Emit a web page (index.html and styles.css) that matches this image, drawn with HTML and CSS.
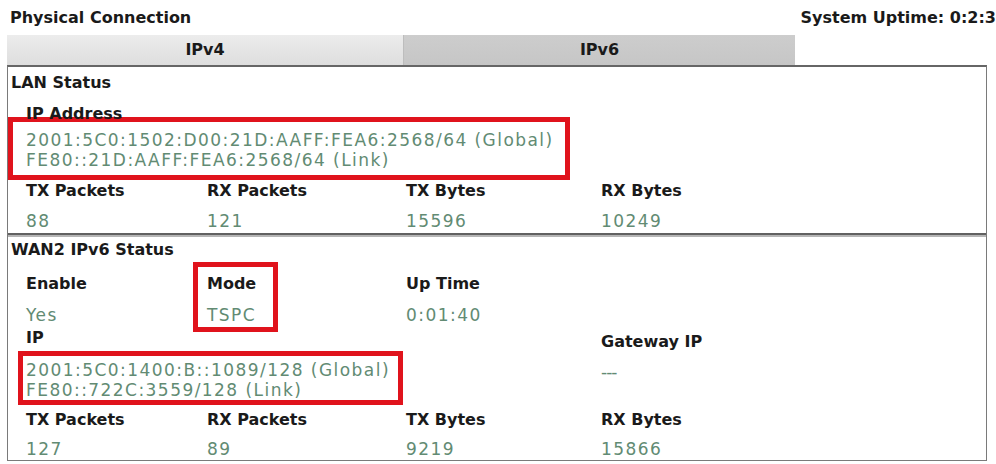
FILE: index.html
```html
<!DOCTYPE html>
<html lang="en">
<head>
    <meta charset="UTF-8">
    <meta name="viewport" content="width=device-width, initial-scale=1.0">
    <title>Physical Connection</title>
    <link rel="stylesheet" href="styles.css">
</head>
<body>
    <div class="top">
        <h1>Physical Connection</h1>
        <span class="uptime">System Uptime: 0:2:3</span>
    </div>

    <div class="tabs">
        <div class="tab">IPv4</div>
        <div class="tab active">IPv6</div>
    </div>

    <div class="panel">
        <!-- LAN -->
        <div class="section">
            <h2>LAN Status</h2>
            <div class="label ip-label">IP Address</div>
            <div class="mark mark-lan">
                <div class="value">2001:5C0:1502:D00:21D:AAFF:FEA6:2568/64 (Global)</div>
                <div class="value">FE80::21D:AAFF:FEA6:2568/64 (Link)</div>
            </div>
            <div class="grid stats">
                <div class="label">TX Packets</div>
                <div class="label">RX Packets</div>
                <div class="label">TX Bytes</div>
                <div class="label">RX Bytes</div>
                <div class="value">88</div>
                <div class="value">121</div>
                <div class="value">15596</div>
                <div class="value">10249</div>
            </div>
        </div>

        <!-- WAN2 -->
        <div class="section wan">
            <h2>WAN2 IPv6 Status</h2>
            <div class="grid info">
                <div class="cell">
                    <div class="label">Enable</div>
                    <div class="value">Yes</div>
                </div>
                <div class="cell mark mark-mode">
                    <div class="label">Mode</div>
                    <div class="value">TSPC</div>
                </div>
                <div class="cell">
                    <div class="label">Up Time</div>
                    <div class="value">0:01:40</div>
                </div>
            </div>
            <div class="grid ip">
                <div class="label">IP</div>
                <div class="label gw">Gateway IP</div>
                <div class="mark mark-wan">
                    <div class="value">2001:5C0:1400:B::1089/128 (Global)</div>
                    <div class="value">FE80::722C:3559/128 (Link)</div>
                </div>
                <div class="value gw-value">---</div>
            </div>
            <div class="grid stats stats-wan">
                <div class="label">TX Packets</div>
                <div class="label">RX Packets</div>
                <div class="label">TX Bytes</div>
                <div class="label">RX Bytes</div>
                <div class="value">127</div>
                <div class="value">89</div>
                <div class="value">9219</div>
                <div class="value">15866</div>
            </div>
        </div>
    </div>
</body>
</html>
```

FILE: styles.css
```css
/* Page */
body {
    margin: 0;
    background-color: #ffffff;
    color: #1a1a1a;
    font-family: "DejaVu Sans", "Liberation Sans", sans-serif;
}

h1, h2 {
    margin: 0;
    font-size: 16px;
    line-height: 20px;
    font-weight: bold;
}

/* Title row */
.top {
    display: flex;
    justify-content: space-between;
    height: 35px;
    box-sizing: border-box;
    padding: 8px 0 7px 10px;
}

.uptime {
    font-size: 16px;
    line-height: 20px;
    font-weight: bold;
    white-space: nowrap;
}

/* Tabs */
.tabs {
    display: flex;
    margin-left: 7px;
}

.tab {
    width: 396px;
    height: 30px;
    line-height: 30px;
    text-align: center;
    font-size: 16px;
    font-weight: bold;
    background: linear-gradient(#ececec, #dedede);
}

.tab.active {
    width: 391px;
    background: linear-gradient(#cdcdcd, #c6c6c6);
    border-left: 1px solid #bdbdbd;
}

/* Box */
.panel {
    width: 980px;
    margin-left: 7px;
    box-sizing: border-box;
    border: 1px solid #7a7a7a;
    border-top: 2px solid #666666;
}

.section {
    padding: 6px 0 1px 18px;
}

.section h2 {
    margin-left: -15px;
}

.section.wan {
    border-top: 4px groove #b5b5b5;
    padding: 3px 0 0 18px;
}

.label {
    font-size: 16px;
    line-height: 20px;
    font-weight: bold;
    color: #1a1a1a;
    white-space: nowrap;
}

.value {
    font-size: 17px;
    line-height: 20px;
    letter-spacing: 1.45px;
    color: #628b73;
    white-space: nowrap;
}

.ip-label {
    margin-top: 11px;
}

/* Red highlight boxes */
.mark {
    border: 5px solid #e0131c;
    box-sizing: border-box;
}

.mark-lan {
    width: 562px;
    margin: -7px 0 0 -18px;
    padding: 8px 0 5px 13px;
}

.mark-mode {
    width: 85px;
    margin: -12px 0 -6px -14px;
    padding: 7px 0 1px 9px;
}

.mark-wan {
    grid-column: 1 / 4;
    width: 385px;
    margin-left: -8px;
    padding: 4px 0 0 3px;
}

/* Columns */
.grid {
    display: grid;
    grid-template-columns: 181px 199px 195px 1fr;
}

.stats {
    margin-top: 1px;
    row-gap: 9px;
}

.stats .value {
    line-height: 22px;
}

.stats-wan {
    margin-top: 5px;
    row-gap: 8px;
}

.info {
    margin-top: 14px;
}

.cell .value {
    margin-top: 10px;
    line-height: 22px;
}

.ip {
    margin-top: 2px;
    row-gap: 3px;
}

.gw {
    grid-column: 4;
    margin: 4px 0 -4px 0;
}

.gw-value {
    grid-column: 4;
    padding-top: 11px;
    letter-spacing: -1px;
}
```
